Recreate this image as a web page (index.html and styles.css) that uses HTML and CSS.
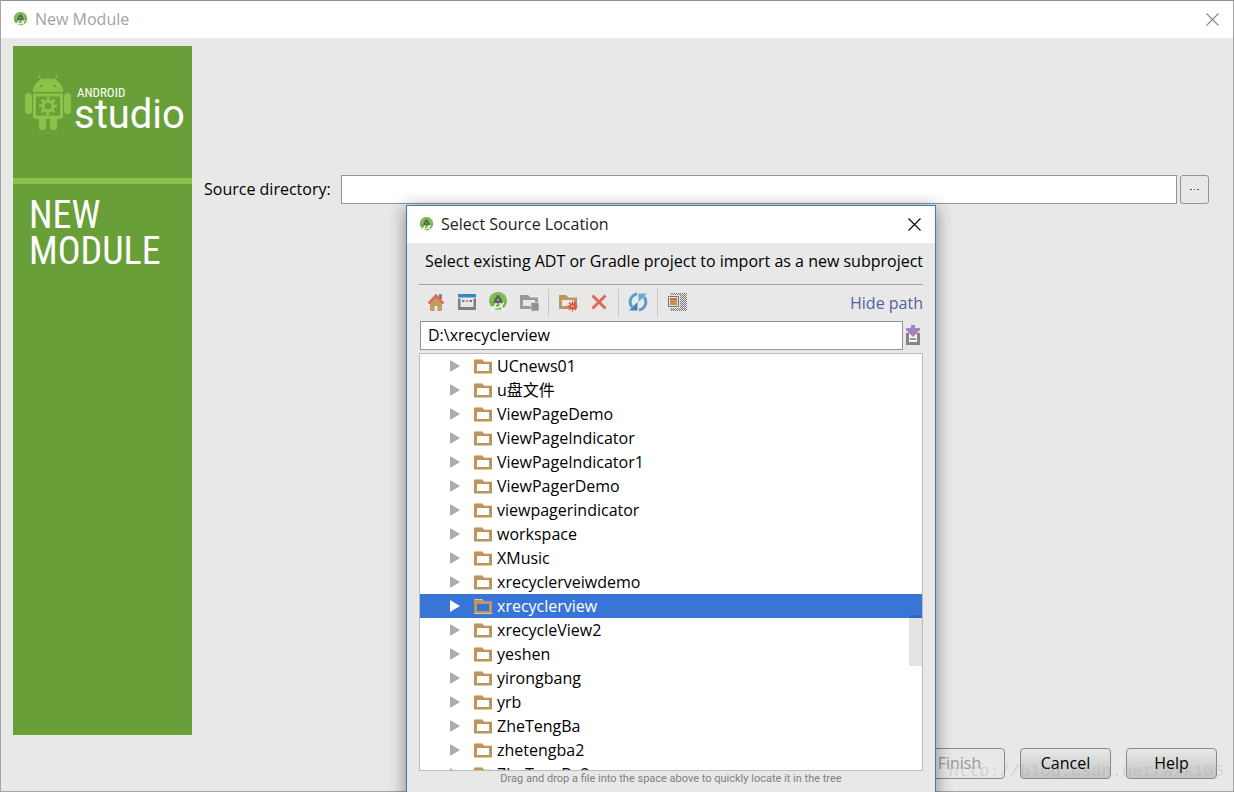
FILE: index.html
```html
<!DOCTYPE html>
<html lang="en">
<head>
<meta charset="utf-8">
<title>New Module</title>
<link rel="stylesheet" href="styles.css">
</head>
<body>
<svg class="defs" aria-hidden="true">
  <defs>
    <symbol id="studio" viewBox="0 0 18 18">
      <circle cx="9" cy="8" r="8" fill="#6fb543"/>
      <path d="M9 0a8 8 0 0 1 8 8H1a8 8 0 0 1 8-8z" fill="#80bd55"/>
      <path d="M7.500 3h3v1.500a3.500 3.500 0 0 1 2 3.200V10h-7V7.700a3.500 3.500 0 0 1 2-3.200z" fill="#57605a"/>
      <circle cx="9" cy="7" r="1.100" fill="#9aa39b"/>
      <path d="M7.500 10 3.500 17.500M10.500 10l4 7.500M3 13.500c5 1.500 9 0 11-4" fill="none" stroke="#f4f7f1" stroke-width="1.500"/>
    </symbol>
    <symbol id="folder" viewBox="0 0 18 16">
      <path d="M0 1.500Q0 1 .5 1H8l2.500 2.500H18V16H0z" fill="#dcc6a5"/>
      <path d="M0 2h8l2.500 2H18v11H0z" fill="#c0955d"/>
      <path class="hole" d="M3 6h12v7H3z"/>
    </symbol>
    <symbol id="close" viewBox="0 0 13 13">
      <path d="M.5.5l12 12M12.500.5l-12 12" fill="none" stroke="currentColor" stroke-width="1.100"/>
    </symbol>
  </defs>
</svg>

<div class="window">
  <header class="titlebar">
    <svg class="app-icon"><use href="#studio"/></svg>
    <h1 class="title">New Module</h1>
    <button class="close" aria-label="Close"><svg><use href="#close"/></svg></button>
  </header>
  <main class="main">
    <aside class="banner">
      <div class="brand">
        <svg class="robot" viewBox="0 0 46 56" aria-hidden="true">
          <g fill="#8bc34a">
            <path d="M13.500.5l3 5M32.500.5l-3 5" stroke="#8bc34a" stroke-width="1.400"/>
            <path d="M8 17C8 8 14 3.500 23 3.500S38 8 38 17z"/>
            <rect x="0" y="18" width="7" height="21" rx="3.500"/>
            <rect x="39" y="18" width="7" height="21" rx="3.500"/>
            <path d="M8 18.500h30V41q0 3-3 3h-3v7.500a3.500 3.500 0 0 1-7 0V44h-4v7.500a3.500 3.500 0 0 1-7 0V44h-3q-3 0-3-3z"/>
          </g>
          <path d="M11 21.500h24v19H11z" fill="#689f38"/>
          <g fill="none" stroke="#8bc34a">
            <circle cx="23" cy="31" r="5" stroke-width="3.400"/>
            <circle cx="23" cy="31" r="7.700" stroke-width="2.800" stroke-dasharray="3 3.048" stroke-dashoffset="1.500"/>
          </g>
          <circle cx="16.500" cy="11" r="1.300" fill="#689f38"/>
          <circle cx="29.500" cy="11" r="1.300" fill="#689f38"/>
        </svg>
        <div class="wordmark"><span class="android">ANDROID</span><span class="studio">studio</span></div>
      </div>
      <h2 class="step">NEW<br>MODULE</h2>
    </aside>
    <form class="source">
      <label for="source">Source directory:</label>
      <input id="source" class="field source-field" type="text">
      <button class="browse" type="button" aria-label="Browse"><svg viewBox="0 0 9 1"><path d="M0 0h2v1H0zM4 0h1v1H4zM7 0h2v1H7z" fill="#555"/></svg></button>
    </form>
  </main>
  <footer class="actions">
    <button class="btn" disabled>Finish</button>
    <button class="btn">Cancel</button>
    <button class="btn">Help</button>
  </footer>
</div>

<section class="dialog" role="dialog" aria-labelledby="dialog-title">
  <header class="titlebar">
    <svg class="app-icon"><use href="#studio"/></svg>
    <h2 class="title" id="dialog-title">Select Source Location</h2>
    <button class="close" aria-label="Close dialog"><svg><use href="#close"/></svg></button>
  </header>
  <div class="dialog-body">
    <p class="intro">Select existing ADT or Gradle project to import as a new subproject</p>
    <div class="toolbar">
      <button class="tool" aria-label="Home"><svg viewBox="0 0 20 20">
        <path d="M13 2h3v5h-3z" fill="#8b8078"/><path d="M4 10l6-6 6 6v9h-4.500v-5h-3v5H4z" fill="#c29b63"/><path d="M2.500 11.500 10 3.500l7.500 8" fill="none" stroke="#dc6660" stroke-width="2.400"/>
      </svg></button>
      <button class="tool" aria-label="Desktop"><svg viewBox="0 0 20 20">
        <path d="M1 2h18v3.500H1z" fill="#3e86b8"/><path d="M1 6.500h18V18H1zM3.500 6.500V15h13V6.500z" fill="#7f7f7f" fill-rule="evenodd"/><path d="M5 8h2.500v2H5z" fill="#408fc4"/><path d="M9 8h2v2H9z" fill="#e08a46"/><path d="M12.500 8H15v2h-2.500z" fill="#777"/>
      </svg></button>
      <button class="tool" aria-label="Project"><svg viewBox="0 0 18 18"><use href="#studio"/></svg></button>
      <button class="tool" aria-label="Module"><svg viewBox="0 0 20 20">
        <path d="M1 3h8l2.500 2.500H19V17H1zM4 8v6h12V8z" fill="#999" fill-rule="evenodd"/><path d="M12 10.500h8V19h-8z" fill="#929292" stroke="#e8e8e8" stroke-width=".6"/>
      </svg></button>
      <span class="sep"></span>
      <button class="tool" aria-label="New folder"><svg viewBox="0 0 20 20">
        <path d="M1 3h7l2.500 2.500H19V17H1zM4 8v6h12V8z" fill="#c0955d" fill-rule="evenodd"/><path d="M14.500 9v10.500M9.500 14.200h10M11 10.500l7 7.500M18 10.500 11 18" stroke="#cf4a38" stroke-width="1.200"/><circle cx="14.500" cy="14.200" r="3" fill="#d9513c"/><circle cx="14.500" cy="14.200" r="1.200" fill="#f6b25f"/>
      </svg></button>
      <button class="tool" aria-label="Delete"><svg viewBox="0 0 20 20"><path d="M3.500 3.500l13 13M16.500 3.500l-13 13" fill="none" stroke="#e0685a" stroke-width="3"/></svg></button>
      <span class="sep"></span>
      <button class="tool" aria-label="Refresh"><svg viewBox="0 0 20 20">
        <path d="M9 2C3 3 0 10 4 15" fill="none" stroke="#5b9dca" stroke-width="3"/><path d="M11 18c6-1 9-8 5-13" fill="none" stroke="#5b9dca" stroke-width="3"/><path d="M1 18.500h8.500V10z" fill="#3d86ba"/><path d="M19 1.500h-8.500V10z" fill="#66a8d2"/>
      </svg></button>
      <span class="sep"></span>
      <button class="tool" aria-label="Show hidden files"><svg viewBox="0 0 20 20">
        <defs><pattern id="dots" width="2" height="2" patternUnits="userSpaceOnUse"><path d="M0 0h1v1H0zM1 1h1v1H1z" fill="#777"/></pattern></defs>
        <path d="M3 1h17v18H3z" fill="url(#dots)"/><path d="M0 3h13v13H0z" fill="#e8e2d8"/><path d="M1.500 4.500h10v10h-10z" fill="none" stroke="#777"/><path d="M3 6h7v7H3z" fill="#c69250"/><path d="M3 6h7v2H3z" fill="#b97c46"/>
      </svg></button>
      <a class="hide-path" href="#path">Hide path</a>
    </div>
    <div class="path-row">
      <input id="path" class="field path-field" type="text" aria-label="Path" value="D:\xrecyclerview">
      <button class="history" aria-label="Path history"><svg viewBox="0 0 16 20">
        <path d="M1 8h3v9h8V8h3v12H1z" fill="#858585"/><path d="M4 10h8v7H4z" fill="#f2f2f2"/><path d="M5 13h6v2H5z" fill="#999"/><path d="M6 0h4v3h5v2l-7 7-7-7V3h5z" fill="#a880bd"/>
      </svg></button>
    </div>
    <div class="tree-box">
      <ul class="tree" role="tree">
        <li role="treeitem"><svg class="arrow" viewBox="0 0 10 12"><path d="M0 0l10 6-10 6z"/></svg><svg class="folder"><use href="#folder"/></svg>UCnews01</li>
        <li role="treeitem"><svg class="arrow" viewBox="0 0 10 12"><path d="M0 0l10 6-10 6z"/></svg><svg class="folder"><use href="#folder"/></svg>u盘文件</li>
        <li role="treeitem"><svg class="arrow" viewBox="0 0 10 12"><path d="M0 0l10 6-10 6z"/></svg><svg class="folder"><use href="#folder"/></svg>ViewPageDemo</li>
        <li role="treeitem"><svg class="arrow" viewBox="0 0 10 12"><path d="M0 0l10 6-10 6z"/></svg><svg class="folder"><use href="#folder"/></svg>ViewPageIndicator</li>
        <li role="treeitem"><svg class="arrow" viewBox="0 0 10 12"><path d="M0 0l10 6-10 6z"/></svg><svg class="folder"><use href="#folder"/></svg>ViewPageIndicator1</li>
        <li role="treeitem"><svg class="arrow" viewBox="0 0 10 12"><path d="M0 0l10 6-10 6z"/></svg><svg class="folder"><use href="#folder"/></svg>ViewPagerDemo</li>
        <li role="treeitem"><svg class="arrow" viewBox="0 0 10 12"><path d="M0 0l10 6-10 6z"/></svg><svg class="folder"><use href="#folder"/></svg>viewpagerindicator</li>
        <li role="treeitem"><svg class="arrow" viewBox="0 0 10 12"><path d="M0 0l10 6-10 6z"/></svg><svg class="folder"><use href="#folder"/></svg>workspace</li>
        <li role="treeitem"><svg class="arrow" viewBox="0 0 10 12"><path d="M0 0l10 6-10 6z"/></svg><svg class="folder"><use href="#folder"/></svg>XMusic</li>
        <li role="treeitem"><svg class="arrow" viewBox="0 0 10 12"><path d="M0 0l10 6-10 6z"/></svg><svg class="folder"><use href="#folder"/></svg>xrecyclerveiwdemo</li>
        <li role="treeitem" class="selected" aria-selected="true"><svg class="arrow" viewBox="0 0 10 12"><path d="M0 0l10 6-10 6z"/></svg><svg class="folder"><use href="#folder"/></svg>xrecyclerview</li>
        <li role="treeitem"><svg class="arrow" viewBox="0 0 10 12"><path d="M0 0l10 6-10 6z"/></svg><svg class="folder"><use href="#folder"/></svg>xrecycleView2</li>
        <li role="treeitem"><svg class="arrow" viewBox="0 0 10 12"><path d="M0 0l10 6-10 6z"/></svg><svg class="folder"><use href="#folder"/></svg>yeshen</li>
        <li role="treeitem"><svg class="arrow" viewBox="0 0 10 12"><path d="M0 0l10 6-10 6z"/></svg><svg class="folder"><use href="#folder"/></svg>yirongbang</li>
        <li role="treeitem"><svg class="arrow" viewBox="0 0 10 12"><path d="M0 0l10 6-10 6z"/></svg><svg class="folder"><use href="#folder"/></svg>yrb</li>
        <li role="treeitem"><svg class="arrow" viewBox="0 0 10 12"><path d="M0 0l10 6-10 6z"/></svg><svg class="folder"><use href="#folder"/></svg>ZheTengBa</li>
        <li role="treeitem"><svg class="arrow" viewBox="0 0 10 12"><path d="M0 0l10 6-10 6z"/></svg><svg class="folder"><use href="#folder"/></svg>zhetengba2</li>
        <li role="treeitem"><svg class="arrow" viewBox="0 0 10 12"><path d="M0 0l10 6-10 6z"/></svg><svg class="folder"><use href="#folder"/></svg>ZheTengBa2</li>
      </ul>
      <span class="thumb"></span>
    </div>
    <p class="hint">Drag and drop a file into the space above to quickly locate it in the tree</p>
  </div>
</section>
<span class="watermark">http://blog.csdn.net/wxk105</span>
</body>
</html>
```
FILE: styles.css
```css
* { box-sizing: border-box; }

body {
  margin: 0;
  height: 100vh;
  overflow: hidden;
  position: relative;
  font-family: "Open Sans", "Noto Sans CJK SC", sans-serif;
  font-size: 16px;
  line-height: 24px;
  color: #000;
}

h1, h2, p, ul { margin: 0; padding: 0; font-weight: 400; }
button, input { font: inherit; color: inherit; }
button { padding: 0; border: 0; background: none; }
svg { display: block; flex: none; }
.defs { position: absolute; width: 0; height: 0; }

.window {
  height: 100%;
  display: flex;
  flex-direction: column;
  border: 1px solid #a5a5a5;
  border-top-color: #929292;
  background: #e8e8e8;
}

.titlebar {
  display: flex;
  align-items: center;
  gap: 7px;
  height: 37px;
  padding: 0 14px 0 12px;
  background: #fff;
}
.app-icon { width: 15px; height: 15px; }
.title { flex: 1; font-size: 16px; line-height: 22px; padding-bottom: 1px; }
.window .title { color: #a3a3a3; }
.close svg { width: 13px; height: 13px; }
.window .close { color: #888; }

.main { flex: 1; display: flex; gap: 12px; padding: 8px 24px 0 12px; }

.banner { width: 179px; background: #689f38; color: #fff; }
.brand {
  display: flex;
  align-items: flex-start;
  gap: 3px;
  height: 138px;
  padding: 29px 0 0 12px;
  border-bottom: 6px solid #8bc34a;
}
.robot { width: 46px; height: 56px; }
.wordmark { display: flex; flex-direction: column; padding-top: 11px; font-family: Roboto, sans-serif; }
.android { padding-left: 3px; font: 13px/14px "Roboto Condensed", "Liberation Sans Narrow", Roboto, sans-serif; }
.studio { font-size: 40px; line-height: 30px; }
.step { padding: 13px 16px; font: 38px/36px "Roboto Condensed", "Liberation Sans Narrow", Roboto, sans-serif; }

.source { flex: 1; display: flex; align-items: center; height: 29px; margin-top: 129px; }
.source label { width: 137px; padding-bottom: 1px; white-space: nowrap; }
.field { min-width: 0; height: 29px; padding: 0 7px 1px; border: 1px solid #949494; background: #fff; outline: 0; }
.source-field { flex: 1; }
.browse {
  display: flex;
  align-items: center;
  justify-content: center;
  width: 29px;
  height: 29px;
  margin-left: 3px;
  border: 1px solid #949494;
  border-radius: 3px;
}
.browse svg { width: 9px; height: 1px; }

.actions { display: flex; justify-content: flex-end; gap: 15px; padding: 13px 16px 12px; }
.btn {
  width: 91px;
  height: 31px;
  padding-bottom: 1px;
  border: 1px solid #8a8a8a;
  border-radius: 4px;
  background: linear-gradient(#e8e8e8, #c4c4c4);
}
.btn:disabled { background: #e8e8e8; color: #999; }

.dialog {
  position: absolute;
  left: 406px;
  top: 205px;
  width: 530px;
  border: 1px solid #2d80c8;
  background: #e8e8e8;
  box-shadow: 0 3px 16px rgba(0, 0, 0, .45);
}
.dialog-body { padding: 0 12px 24px; }
.dialog .title { color: #222; }
.intro { padding: 6px 0 11px 6px; border-bottom: 1px solid #a0a0a0; white-space: nowrap; }

.toolbar { display: flex; align-items: center; height: 36px; padding-left: 7px; }
.tool { margin-right: 11px; padding-bottom: 2px; }
.tool svg { width: 20px; height: 20px; }
.sep { width: 1px; height: 28px; margin: 0 9px 0 -2px; background: #c8c8c8; }
.hide-path { margin-left: auto; padding-bottom: 1px; color: #5560a0; text-decoration: none; }

.path-row { display: flex; align-items: center; gap: 2px; padding-left: 1px; }
.path-field { flex: 1; }
.history { margin-right: 2px; padding-bottom: 1px; }
.history svg { width: 16px; height: 20px; }

.tree-box { position: relative; height: 418px; margin-top: 3px; border: 1px solid #bdbdbd; background: #fff; overflow: hidden; }
.tree { list-style: none; }
.tree li { display: flex; align-items: center; height: 24px; padding-left: 30px; white-space: nowrap; }
.arrow { width: 10px; height: 12px; margin-right: 14px; fill: #adadad; }
.folder { width: 18px; height: 16px; margin-right: 5px; fill: #fff; }
.tree .selected { background: #3875d7; color: #fff; }
.selected .arrow { fill: #fff; }
.selected .folder { fill: #3875d7; }
.thumb { position: absolute; right: 0; top: 261px; width: 13px; height: 51px; background: rgba(0, 0, 0, .11); }
.hint { font-family: Roboto, sans-serif; font-size: 11px; line-height: 16px; text-align: center; color: #808080; }

.watermark {
  position: absolute;
  right: 10px;
  bottom: 8px;
  font: 17px/24px "Liberation Mono", monospace;
  color: rgba(160, 160, 145, .3);
  pointer-events: none;
}
```
